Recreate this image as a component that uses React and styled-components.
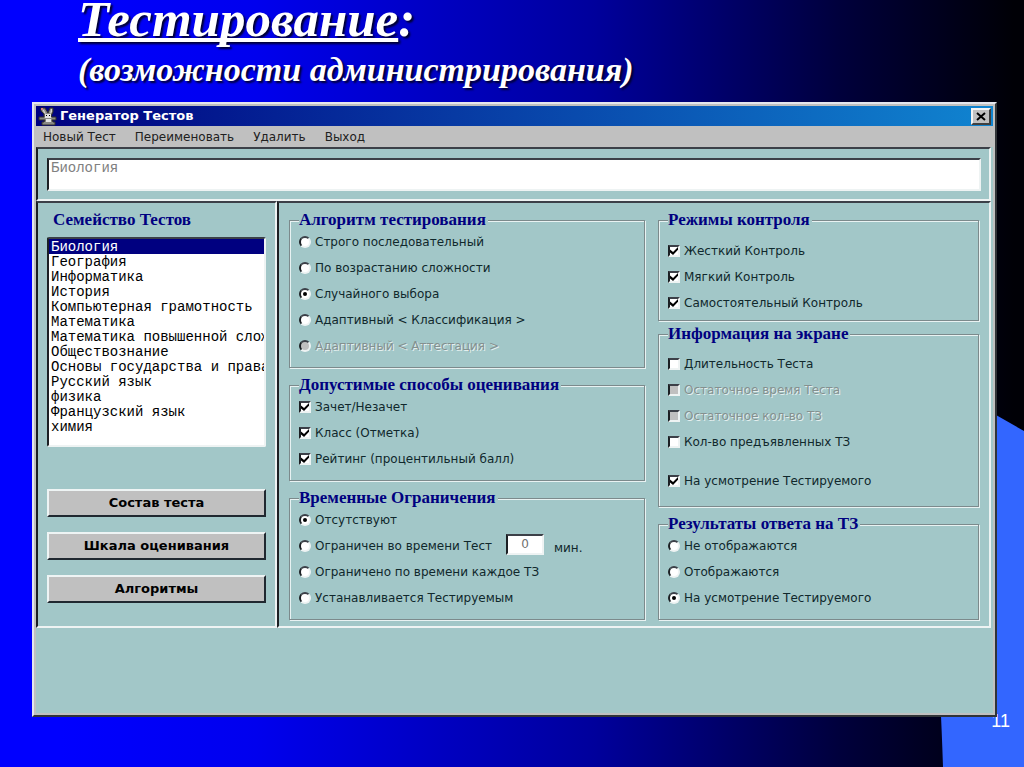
import React, { useState } from 'react';
import styled, { createGlobalStyle, css } from 'styled-components';

const GlobalStyle = createGlobalStyle`
  * {
    box-sizing: border-box;
  }

  body {
    margin: 0;
    background: #0000ff;
  }
`;

const teal = '#a2c7c8';
const uiFont = "'DejaVu Sans', 'Liberation Sans', sans-serif";
const serifFont = "'Liberation Serif', 'Times New Roman', serif";
const monoFont = "'Liberation Mono', 'Courier New', monospace";

const sunken = css`
  border: 2px solid;
  border-color: #3c4048 #eef3f3 #eef3f3 #1c2024;
`;

const Slide = styled.div`
  position: relative;
  display: flex;
  flex-direction: column;
  min-height: 100vh;
  padding: 0 27px 50px 32px;
  overflow: hidden;
  background: linear-gradient(90deg, #0000ff 6%, #0000ee 25%, #00009c 58%, #00003c 82%, #000006 99%);
`;

const Swoosh = styled.svg`
  position: absolute;
  right: 0;
  bottom: 0;
  width: 84px;
  height: 352px;
`;

const SlideNumber = styled.span`
  position: absolute;
  right: 14px;
  bottom: 36px;
  color: #fff;
  font: 18px/20px 'Liberation Sans', Arial, sans-serif;
`;

const Heading = styled.header`
  height: 102px;
  padding-left: 46px;
  color: #fff;
  font-family: ${serifFont};
  font-weight: bold;
  font-style: italic;
  white-space: nowrap;
  text-shadow: 2px 2px 2px #000030;
`;

const Title = styled.h1`
  margin: 0;
  font-size: 51px;
  line-height: 38px;

  u {
    text-decoration-thickness: 4px;
    text-decoration-skip-ink: none;
  }
`;

const Subtitle = styled.p`
  margin: 12px 0 0;
  font-size: 34px;
  line-height: 40px;
`;

const Window = styled.main`
  position: relative;
  display: flex;
  flex-direction: column;
  flex: 1;
  padding: 2px;
  border: 2px solid;
  border-color: #e4e6ee #303438 #303438 #e4e6ee;
  background: #c0c0c0;
`;

const TitleBar = styled.div`
  display: flex;
  align-items: center;
  height: 20px;
  padding: 0 2px;
  background: linear-gradient(90deg, #000080, #1084d0);
  color: #fff;
  font: bold 13px/18px ${uiFont};
`;

const Caption = styled.span`
  flex: 1;
  margin-left: 2px;
`;

const CloseButton = styled.button`
  display: grid;
  place-items: center;
  width: 20px;
  height: 17px;
  padding: 0;
  border: 2px solid;
  border-color: #f4f4f4 #404040 #404040 #f4f4f4;
  background: #c0c0c0;
`;

const MenuBar = styled.nav`
  display: flex;
  align-items: center;
  gap: 19px;
  height: 21px;
  padding: 0 7px;
`;

const MenuItem = styled.button`
  padding: 0;
  border: 0;
  background: none;
  color: #202020;
  font: 12px/20px ${uiFont};
`;

const Body = styled.div`
  flex: 1;
  padding-right: 2px;
  background: ${teal};
`;

const Panel = styled.section`
  ${sunken}
  display: flex;
  flex-direction: column;
  padding: ${(p) => p.$pad};
`;

const Columns = styled.div`
  display: grid;
  grid-template-columns: 241px 1fr;
`;

const TestName = styled.textarea`
  ${sunken}
  display: block;
  width: 100%;
  height: 33px;
  padding: 0 2px;
  background: #fff;
  color: #808080;
  font: 14px/17px ${monoFont};
  resize: none;
`;

const ListLabel = styled.label`
  margin: 0 0 8px 6px;
  color: #000080;
  font: bold 17px/18px ${serifFont};
`;

const TestList = styled.select`
  ${sunken}
  height: 210px;
  padding: 0;
  overflow: hidden;
  background: #fff;
  color: #000;
  font: 14px/15px ${monoFont};

  option {
    height: 15px;
    min-height: 0;
    padding: 0 0 0 2px;
    line-height: 15px;
  }

  option:checked {
    background: linear-gradient(#000080, #000080);
    -webkit-text-fill-color: #fff;
  }
`;

const ButtonStack = styled.div`
  display: flex;
  flex-direction: column;
  gap: 15px;
  margin-top: 42px;
`;

const PushButton = styled.button`
  height: 28px;
  border: 2px solid;
  border-color: #eef4f4 #202830 #202830 #eef4f4;
  background: #c0c0c0;
  color: #000;
  font: bold 13px/20px ${uiFont};
`;

const GroupGrid = styled.div`
  display: grid;
  grid-template-columns: 356fr 321fr;
  gap: 13px;
`;

const GroupColumn = styled.div`
  display: flex;
  flex-direction: column;
  gap: ${(p) => p.$gap}px;

  > :last-child {
    margin-top: auto;
  }
`;

const Group = styled.fieldset`
  min-width: 0;
  margin: 0;
  padding: ${(p) => p.$pad || '0 9px 8px'};
  border: 1px solid #7c8a8c;
  box-shadow: 1px 1px 0 #e8f2f2, inset 1px 1px 0 #e8f2f2;
`;

const Legend = styled.legend`
  padding: 0 2px 0 0;
  background: ${teal};
  color: #000080;
  font: bold 17px/18px ${serifFont};
`;

const Row = styled.div`
  display: flex;
  align-items: center;
  height: 26px;
  margin-top: ${(p) => (p.$apart ? 13 : 0)}px;
`;

const OptionLabel = styled.label`
  display: flex;
  align-items: center;
  gap: 4px;
  color: ${(p) => (p.$off ? '#84908f' : '#10282c')};
  font: 12px/20px ${uiFont};
  white-space: nowrap;
  text-shadow: ${(p) => (p.$off ? '1px 1px 0 #e4efef' : 'none')};
`;

const Mark = styled.input`
  ${sunken}
  appearance: none;
  display: grid;
  place-items: center;
  width: 12px;
  height: 12px;
  margin: 0;
  background: #fff;

  &:disabled {
    background: #c0c0c0;
  }

  &[type='radio'] {
    border-radius: 50%;
  }

  &[type='radio']:checked::after {
    content: '';
    width: 4px;
    height: 4px;
    border-radius: 50%;
    background: #000;
  }

  &[type='checkbox']:checked::after {
    content: '';
    width: 8px;
    height: 8px;
    background: #000;
    clip-path: polygon(0 30%, 38% 62%, 100% 0, 100% 35%, 38% 100%, 0 68%);
  }
`;

const Minutes = styled.input`
  ${sunken}
  width: 38px;
  height: 21px;
  margin: 0 10px 4px 14px;
  padding: 0;
  background: #fff;
  color: #707070;
  font: 12px/16px ${uiFont};
  text-align: center;
`;

const Unit = styled.label`
  padding-top: 4px;
  color: #10282c;
  font: 12px/20px ${uiFont};
`;

const tests = [
  'Биология',
  'География',
  'Информатика',
  'История',
  'Компьютерная грамотность',
  'Математика',
  'Математика повышенной сложности',
  'Обществознание',
  'Основы государства и права',
  'Русский язык',
  'физика',
  'Французский язык',
  'химия',
];

const Option = ({ type = 'checkbox', name, text, on, off, apart, children }) => (
  <Row $apart={apart}>
    <OptionLabel $off={off}>
      <Mark type={type} name={name} defaultChecked={on} disabled={off} />
      {text}
    </OptionLabel>
    {children}
  </Row>
);

const AppIcon = () => (
  <svg width="20" height="20" viewBox="0 0 20 20" aria-hidden="true">
    <path d="M3 2h4l3 5 2-5h3v4l-2 4 1 1h4v3h-4l1 2h2v3H4v-3h2l1-2H1v-3h5V8L3 5z" fill="#8a8a86" stroke="#30302c" />
    <path d="M4 3l2 1 2 4-2-1zM13 3h1v3l-2 2z" fill="#d8d4cc" />
    <path d="M3 2h2v2H3z" fill="#d88080" />
    <path d="M7 8h6v4H7zM8 13h5v3H8z" fill="#e4e4e4" />
    <path d="M8 9h1v1H8zM11 9h1v1h-1z" fill="#000" />
  </svg>
);

const App = () => {
  const [test, setTest] = useState('Биология');

  return (
    <Slide>
      <GlobalStyle />
      <Swoosh viewBox="0 0 84 352" preserveAspectRatio="none" aria-hidden="true">
        <path d="M0 0H56L84 16V352H3Q2 320 0 280Z" fill="#3366ff" />
      </Swoosh>
      <SlideNumber>11</SlideNumber>

      <Heading>
        <Title><u>Тестирование</u>:</Title>
        <Subtitle>(возможности администрирования)</Subtitle>
      </Heading>

      <Window>
        <TitleBar>
          <AppIcon />
          <Caption>Генератор Тестов</Caption>
          <CloseButton aria-label="Закрыть">
            <svg width="10" height="9" viewBox="0 0 10 9" aria-hidden="true">
              <path d="M1 1l8 7M9 1L1 8" stroke="#000" strokeWidth="2" />
            </svg>
          </CloseButton>
        </TitleBar>
        <MenuBar>
          <MenuItem>Новый Тест</MenuItem>
          <MenuItem>Переименовать</MenuItem>
          <MenuItem>Удалить</MenuItem>
          <MenuItem>Выход</MenuItem>
        </MenuBar>

        <Body>
          <Panel $pad="9px 8px 8px 9px">
            <TestName aria-label="Тест" value={test} disabled />
          </Panel>
          <Columns>
            <Panel $pad="8px 9px">
              <ListLabel htmlFor="tests">Семейство Тестов</ListLabel>
              <TestList id="tests" size={13} value={test} onChange={(e) => setTest(e.target.value)}>
                {tests.map((t) => <option key={t}>{t}</option>)}
              </TestList>
              <ButtonStack>
                <PushButton>Состав теста</PushButton>
                <PushButton>Шкала оценивания</PushButton>
                <PushButton>Алгоритмы</PushButton>
              </ButtonStack>
            </Panel>

            <Panel $pad="8px 10px 6px">
              <GroupGrid>
                <GroupColumn $gap={8}>
                  <Group>
                    <Legend>Алгоритм тестирования</Legend>
                    <Option type="radio" name="algorithm" text="Строго последовательный" />
                    <Option type="radio" name="algorithm" text="По возрастанию сложности" />
                    <Option type="radio" name="algorithm" text="Случайного выбора" on />
                    <Option type="radio" name="algorithm" text="Адаптивный < Классификация >" />
                    <Option type="radio" name="algorithm" text="Адаптивный < Аттестация >" off />
                  </Group>
                  <Group>
                    <Legend>Допустимые способы оценивания</Legend>
                    <Option text="Зачет/Незачет" on />
                    <Option text="Класс (Отметка)" on />
                    <Option text="Рейтинг (процентильный балл)" on />
                  </Group>
                  <Group>
                    <Legend>Временные Ограничения</Legend>
                    <Option type="radio" name="time" text="Отсутствуют" on />
                    <Option type="radio" name="time" text="Ограничен во времени Тест">
                      <Minutes id="minutes" defaultValue="0" />
                      <Unit htmlFor="minutes">мин.</Unit>
                    </Option>
                    <Option type="radio" name="time" text="Ограничено по времени каждое ТЗ" />
                    <Option type="radio" name="time" text="Устанавливается Тестируемым" />
                  </Group>
                </GroupColumn>

                <GroupColumn $gap={4}>
                  <Group $pad="9px 9px 4px">
                    <Legend>Режимы контроля</Legend>
                    <Option text="Жесткий Контроль" on />
                    <Option text="Мягкий Контроль" on />
                    <Option text="Самостоятельный Контроль" on />
                  </Group>
                  <Group $pad="8px 9px 12px">
                    <Legend>Информация на экране</Legend>
                    <Option text="Длительность Теста" />
                    <Option text="Остаточное время Теста" off />
                    <Option text="Остаточное кол-во ТЗ" off />
                    <Option text="Кол-во предъявленных ТЗ" />
                    <Option text="На усмотрение Тестируемого" on apart />
                  </Group>
                  <Group>
                    <Legend>Результаты ответа на ТЗ</Legend>
                    <Option type="radio" name="results" text="Не отображаются" />
                    <Option type="radio" name="results" text="Отображаются" />
                    <Option type="radio" name="results" text="На усмотрение Тестируемого" on />
                  </Group>
                </GroupColumn>
              </GroupGrid>
            </Panel>
          </Columns>
        </Body>
      </Window>
    </Slide>
  );
};

export default App;
